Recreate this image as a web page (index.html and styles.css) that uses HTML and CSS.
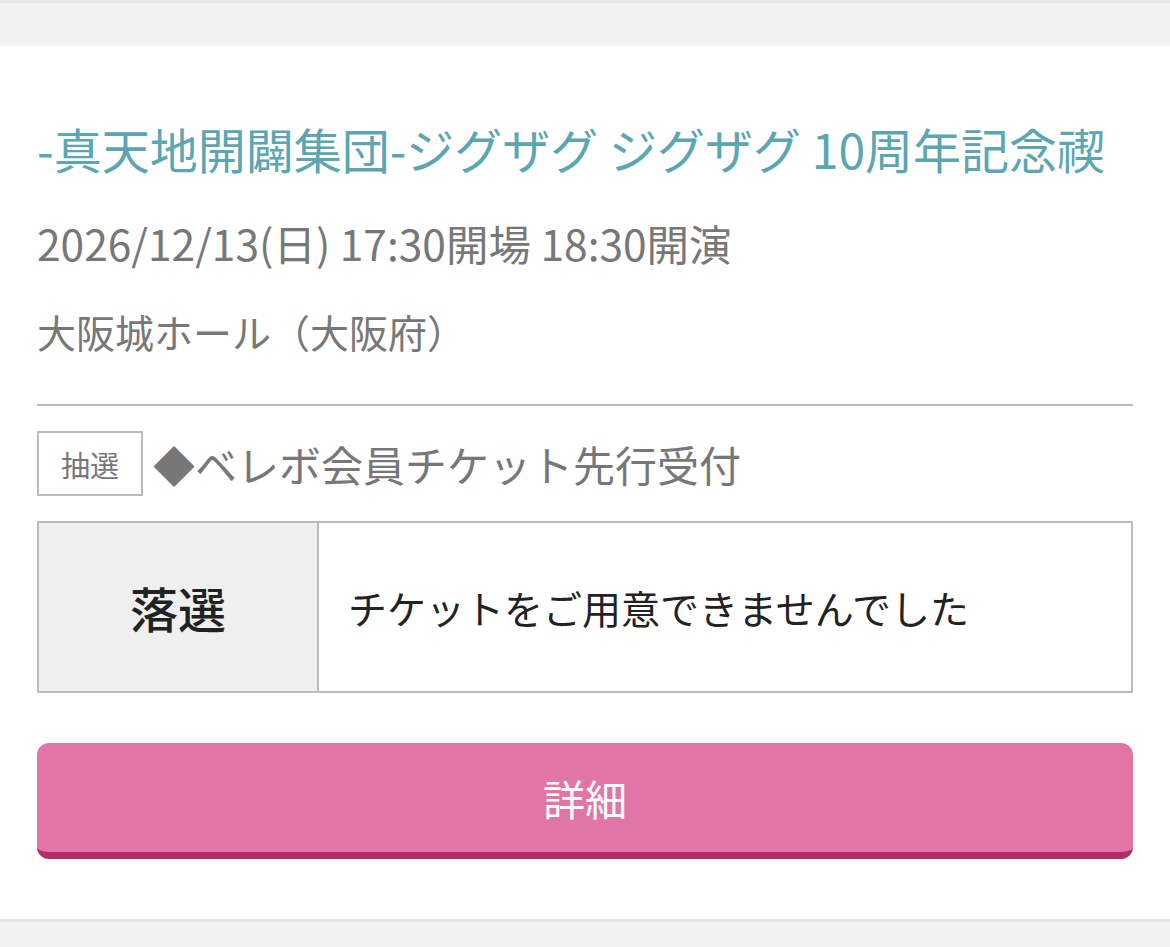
FILE: index.html
```html
<!DOCTYPE html>
<html lang="ja">
<head>
  <meta charset="UTF-8">
  <meta name="viewport" content="width=device-width, initial-scale=1.0">
  <title>申込履歴</title>
  <link rel="stylesheet" href="styles.css">
</head>
<body>
  <div class="top-band"></div>

  <!-- 公演カード -->
  <section class="event-card">
    <h2 class="event-title">-真天地開闢集団-ジグザグ ジグザグ 10周年記念禊</h2>
    <p class="event-date">2026/12/13(日) 17:30開場 18:30開演</p>
    <p class="event-venue">大阪城ホール（大阪府）</p>

    <div class="sale">
      <span class="sale-tag">抽選</span>
      <span class="sale-name">◆ベレボ会員チケット先行受付</span>
    </div>

    <div class="result">
      <div class="result-label">落選</div>
      <div class="result-text">チケットをご用意できませんでした</div>
    </div>

    <a class="detail-button" href="#">詳細</a>
  </section>
</body>
</html>
```

FILE: styles.css
```css
body {
  margin: 0;
  padding: 0;
  background-color: #f2f2f2;
  font-family: "Noto Sans CJK JP", "Noto Sans", sans-serif;
  color: #777;
}
.top-band {
  height: 43px;
  border-top: 3px solid #e6e6e6;
  background-color: #f2f2f2;
}
.event-card {
  background-color: #fff;
  padding: 69px 37px 60px;
  border-bottom: 3px solid #e4e4e4;
}
.event-title {
  margin: 0;
  font-size: 48px;
  font-weight: 400;
  line-height: 67px;
  color: #5ba6b1;
  white-space: nowrap;
}
.event-date {
  margin: 33px 0 0;
  font-size: 42.5px;
  line-height: 56px;
}
.event-venue {
  margin: 32px 0 0;
  font-size: 39px;
  line-height: 56px;
  padding-bottom: 45px;
  border-bottom: 2px solid #bbb;
}
.sale {
  display: flex;
  align-items: center;
  gap: 10px;
  margin-top: 25px;
}
.sale-tag {
  box-sizing: border-box;
  height: 65px;
  width: 106px;
  display: flex;
  align-items: center;
  justify-content: center;
  border: 2px solid #bbb;
  font-size: 29px;
  color: #777;
}
.sale-name {
  font-size: 42px;
  line-height: 56px;
  color: #777;
}
.result {
  display: flex;
  margin-top: 25px;
  height: 172px;
  box-sizing: border-box;
  border: 2px solid #bbb;
  color: #222;
}
.result-label {
  width: 278px;
  flex: 0 0 278px;
  display: flex;
  align-items: center;
  justify-content: center;
  background-color: #efefef;
  border-right: 2px solid #bbb;
  font-size: 48px;
  font-weight: 500;
}
.result-text {
  display: flex;
  align-items: center;
  padding-left: 29px;
  font-size: 39px;
}
.detail-button {
  display: flex;
  align-items: center;
  justify-content: center;
  margin-top: 50px;
  height: 109px;
  border-radius: 12px;
  background-color: #e075a6;
  border-bottom: 7px solid #b12d68;
  color: #fff;
  font-size: 42px;
  text-decoration: none;
}
```
